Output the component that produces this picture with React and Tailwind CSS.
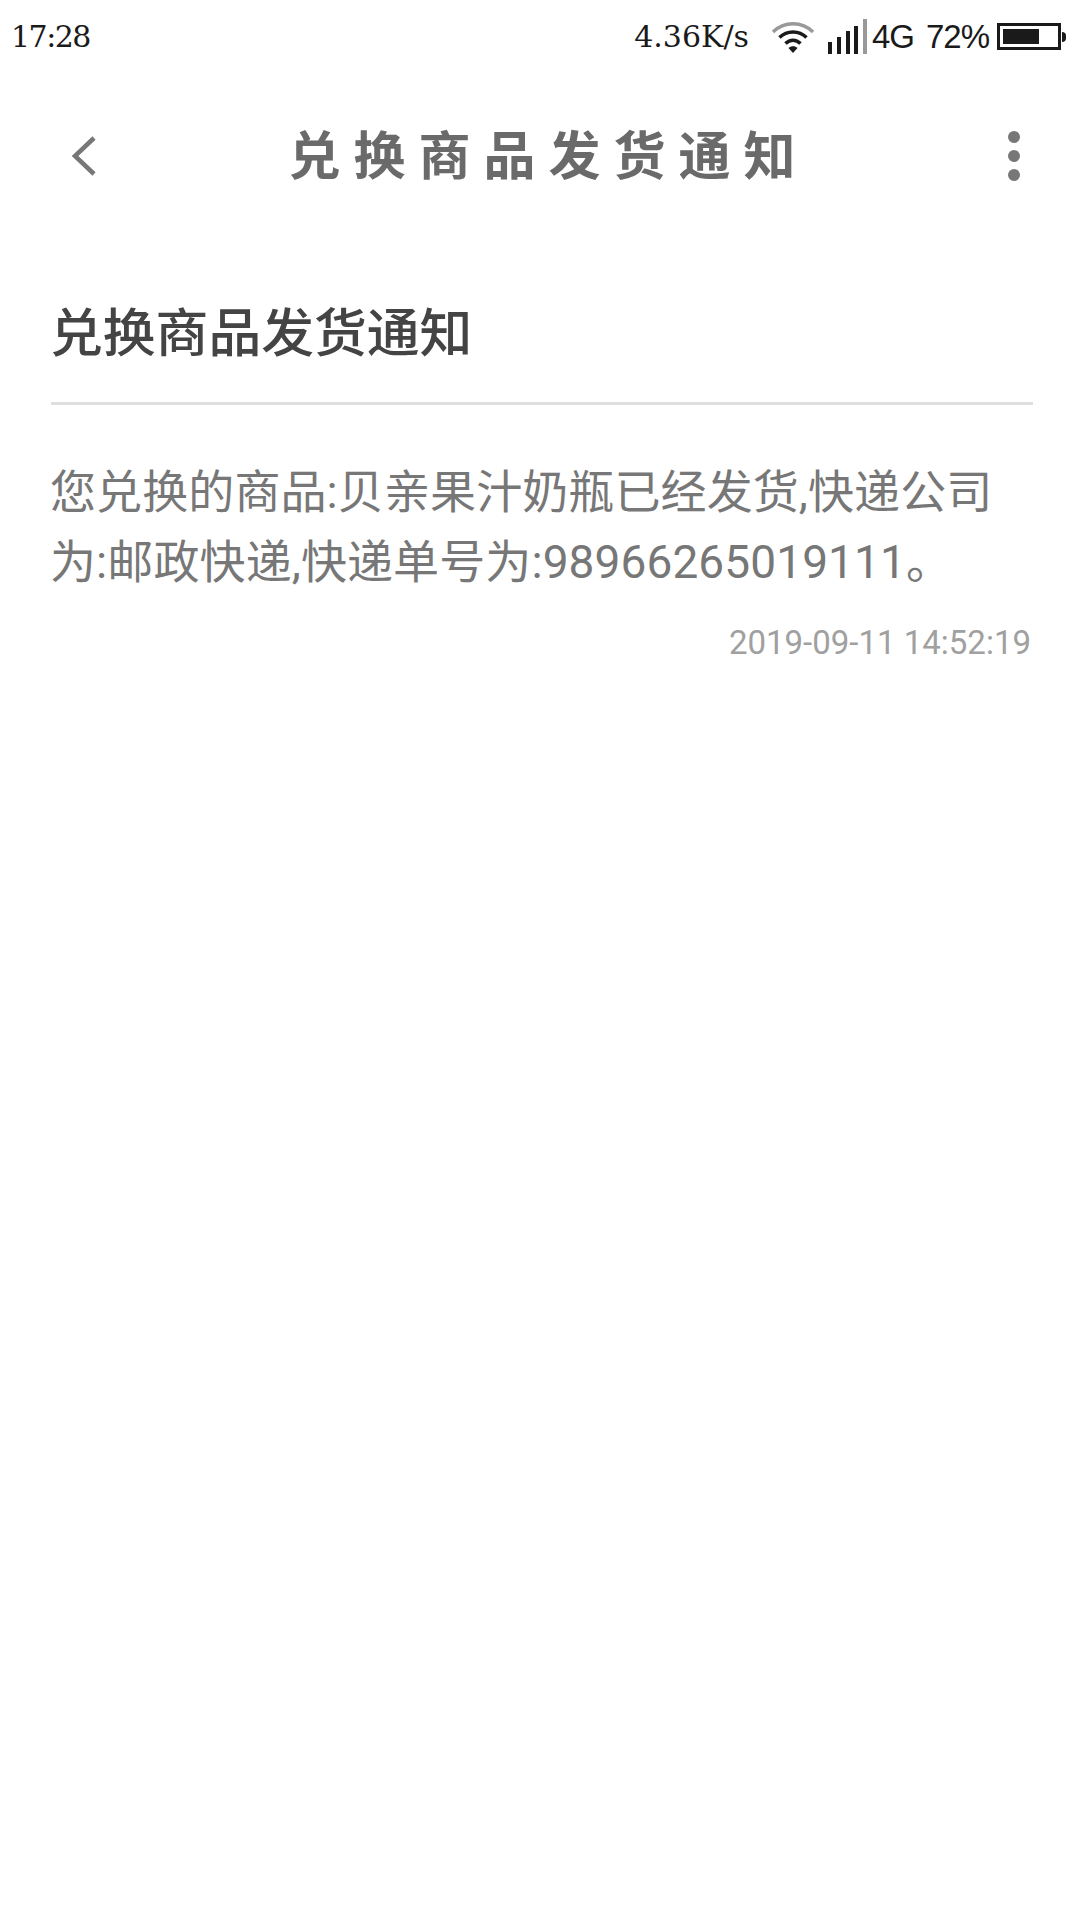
const cjk = 'font-["Roboto","Noto_Sans_CJK_SC",sans-serif]';

function WifiIcon() {
  return (
    <svg width="44" height="34" viewBox="0 0 44 34" fill="none">
      <path d="M2 12C13 1 31 1 42 12" stroke="#999" strokeWidth="3.5" />
      <path d="M8.5 17.5C16 10 28 10 35.500 17.500" stroke="#1a1a1a" strokeWidth="3.5" />
      <path d="M14.500 23.500C19 19 25 19 29.500 23.500" stroke="#1a1a1a" strokeWidth="3.500" />
      <path d="M17.500 28C20 25.500 24 25.500 26.500 28L22 33Z" fill="#1a1a1a" />
    </svg>
  );
}

function SignalIcon() {
  return (
    <svg width="39" height="35" viewBox="0 0 39 35">
      <rect x="0" y="23" width="4" height="12" fill="#1a1a1a" />
      <rect x="9" y="18" width="4" height="17" fill="#1a1a1a" />
      <rect x="18" y="12" width="4" height="23" fill="#1a1a1a" />
      <rect x="26" y="7" width="4" height="28" fill="#1a1a1a" />
      <rect x="35" y="0" width="4" height="35" fill="#999" />
    </svg>
  );
}

function BatteryIcon() {
  return (
    <div className="flex items-center">
      <div className="flex h-[27px] w-[64px] items-center border-[3px] border-[#1a1a1a] p-[3px]">
        <div className="h-full w-[70%] bg-[#1a1a1a]" />
      </div>
      <div className="ml-[1px] h-[10px] w-[4px] rounded-r-sm bg-[#1a1a1a]" />
    </div>
  );
}

export default function App() {
  return (
    <div className={`flex min-h-[1920px] w-[1080px] flex-col bg-white ${cjk}`}>
      <div className="flex h-[73px] items-center justify-between pl-[11px] pr-[14px] font-['DejaVu_Serif',serif] text-[#1a1a1a]">
        <span className="text-[30px] tracking-[-1.5px]">17:28</span>
        <div className="flex items-center">
          <span className="text-[30px]">4.36K/s</span>
          <div className="ml-[22px]"><WifiIcon /></div>
          <div className="ml-[13px]"><SignalIcon /></div>
          <span className="ml-[5px] font-['Liberation_Sans',sans-serif] text-[33px] tracking-[-1px]">4G</span>
          <span className="ml-[12px] font-['Liberation_Sans',sans-serif] text-[33px] tracking-[-1px]">72%</span>
          <div className="ml-[8px]"><BatteryIcon /></div>
        </div>
      </div>

      <div className="flex h-[165px] items-center justify-between pl-[71px] pr-[60px]">
        <svg width="26" height="42" viewBox="0 0 26 42" fill="none">
          <path d="M23 3L4 21L23 39" stroke="#777" strokeWidth="4.500" />
        </svg>
        <h1 className="mr-[8px] pt-[4px] text-[52px] font-bold tracking-[13px] text-[#6a6a6a]">兑换商品发货通知</h1>
        <div className="flex flex-col gap-[7px]">
          <div className="h-[12px] w-[12px] rounded-full bg-[#777]" />
          <div className="h-[12px] w-[12px] rounded-full bg-[#777]" />
          <div className="h-[12px] w-[12px] rounded-full bg-[#777]" />
        </div>
      </div>

      <div className="pl-[51px] pr-[47px] pt-[56px]">
        <h2 className="-ml-[1px] text-[52.8px] leading-[80px] font-medium text-[#444]">兑换商品发货通知</h2>
        <div className="mt-[28px] h-[3px] bg-[#dfdfdf]" />
        <p className="-ml-[1px] mt-[52px] text-[46px] leading-[70px] tracking-[0.1px] text-[#777]">
          您兑换的商品:贝亲果汁奶瓶已经发货,快递公司为:邮政快递,快递单号为:98966265019111。
        </p>
        <p className="mt-[25px] pr-[2px] text-right font-['Roboto',sans-serif] text-[33px] leading-[42px] text-[#a0a0a0]">
          2019-09-11 14:52:19
        </p>
      </div>
    </div>
  );
}
